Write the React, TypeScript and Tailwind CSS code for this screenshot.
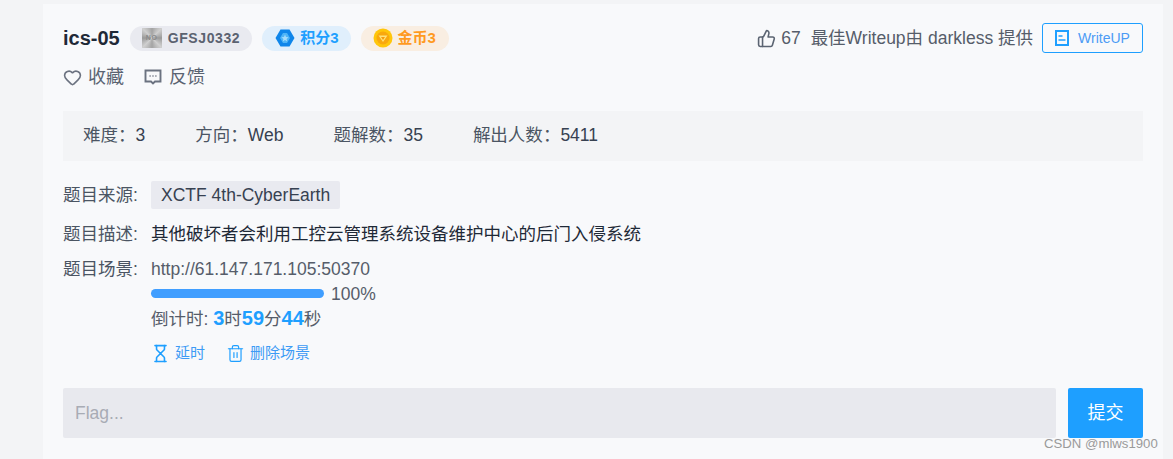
import { Heart, ThumbsUp, Hourglass, Trash2 } from "lucide-react";

const FONT = "font-['Liberation_Sans','Noto_Sans_CJK_SC',sans-serif]";

function NoImage() {
  return (
    <div className="h-5 w-5 bg-[conic-gradient(#a3a3a3,#cfcfcf,#999999,#cfcfcf,#a3a3a3,#cfcfcf,#999999,#cfcfcf,#a3a3a3)] text-center text-[7px] leading-5 text-[#8a8a8a]">
      NO
    </div>
  );
}

function PointsIcon() {
  return (
    <svg width="20" height="20" viewBox="0 0 20 20">
      <polygon points="5.5,1.5 14.5,1.5 19.5,10 14.5,18.5 5.5,18.5 0.5,10" fill="#0f86ea" />
      <polygon points="8,5 12,5 15,10 12,15 8,15 5,10" fill="#4db4f7" />
      <polygon points="10,6.5 11,9 13.5,9.2 11.6,10.9 12.2,13.5 10,12.1 7.8,13.5 8.4,10.9 6.5,9.2 9,9" fill="#a5dcfb" />
    </svg>
  );
}

function CoinIcon() {
  return (
    <svg width="20" height="20" viewBox="0 0 20 20">
      <circle cx="10" cy="10" r="9.5" fill="#ffc60a" />
      <circle cx="10" cy="10" r="6.5" fill="#f9a80d" />
      <polygon points="5.5,7.5 14.5,7.5 10,14" fill="#ffe27a" />
      <polygon points="8,9 12,9 10,12" fill="#f59a0c" />
    </svg>
  );
}

function FeedbackIcon() {
  return (
    <svg width="18" height="18" viewBox="0 0 18 18" fill="none" stroke="#6b7280" strokeWidth="1.9">
      <path d="M1.5 2.5h15v11h-5.5L9 15.5 7 13.5H1.5z" />
      <path d="M5.5 8h1.2M8.4 8h1.2M11.3 8h1.2" strokeWidth="1.5" />
    </svg>
  );
}

function DocIcon() {
  return (
    <svg width="14" height="16" viewBox="0 0 14 16" fill="none" stroke="#1e9fff">
      <path d="M1 1h12v14H1z" strokeWidth="2" />
      <path d="M3.5 6h4M3.5 10h7" strokeWidth="1.6" />
    </svg>
  );
}

function Stat({ label, value }: { label: string; value: string }) {
  return (
    <div className="mr-[50px] text-[#374151]">
      <span className="text-[#4b5563]">{label}：</span>
      {value}
    </div>
  );
}

function Row({ label, children, className }: { label: string; children: React.ReactNode; className?: string }) {
  return (
    <div className={`flex ${className ?? ""}`}>
      <div className="w-[88px] shrink-0 text-[#4b5563]">{label}:</div>
      <div className="min-w-0 flex-1">{children}</div>
    </div>
  );
}

export default function App() {
  return (
    <div className={`h-[459px] w-[1173px] overflow-hidden bg-[#f3f4f6] pt-1 pl-[43px] text-[17.5px] ${FONT}`}>
      <div className="relative h-[455px] w-[1120px] bg-[#f8f9fb] px-5 pt-[20px]">
        <div className="flex h-7 items-center justify-between">
          <div className="flex items-center">
            <span className="text-xl font-bold text-[#1f2937]">ics-05</span>
            <div className="ml-[10px] flex h-[25px] items-center gap-[6px] rounded-full bg-[#e9eaf0] pl-3 pr-3 text-sm font-bold tracking-[0.6px] text-[#5b6270]">
              <NoImage />
              GFSJ0332
            </div>
            <div className="ml-[10px] flex h-[25px] items-center gap-[5px] rounded-full bg-[#e0effc] pl-[13px] pr-3 text-[15px] font-bold text-[#1e9fff]">
              <PointsIcon />
              积分3
            </div>
            <div className="ml-[10px] flex h-[25px] items-center gap-[5px] rounded-full bg-[#f9eee2] pl-3 pr-[13px] text-[15px] font-bold text-[#ff9a1f]">
              <CoinIcon />
              金币3
            </div>
          </div>
          <div className="flex items-center text-[#565d6a]">
            <ThumbsUp size={19} strokeWidth={2} className="text-[#5b6472]" />
            <span className="ml-[5px]">67</span>
            <span className="ml-[10px]">最佳Writeup由 darkless 提供</span>
            <button className="ml-[9px] flex h-[30px] w-[101px] items-center justify-center gap-[9px] rounded-[3px] border border-[#1e9fff] text-sm text-[#4c9bf5]">
              <DocIcon />
              WriteUP
            </button>
          </div>
        </div>

        <div className="mt-[11px] flex h-7 items-center text-lg text-[#5b6472]">
          <Heart size={19} strokeWidth={2} className="text-[#6b7280]" />
          <span className="ml-[6px]">收藏</span>
          <span className="ml-[20px]"><FeedbackIcon /></span>
          <span className="ml-[7px]">反馈</span>
        </div>

        <div className="mt-5 flex h-[50px] items-center bg-[#f3f4f6] pb-px pl-5">
          <Stat label="难度" value="3" />
          <Stat label="方向" value="Web" />
          <Stat label="题解数" value="35" />
          <Stat label="解出人数" value="5411" />
        </div>

        <Row label="题目来源" className="mt-5 leading-7">
          <span className="inline-block h-7 rounded-[2px] bg-[#e9eaf0] px-[10px] text-[#374151]">XCTF 4th-CyberEarth</span>
        </Row>
        <Row label="题目描述" className="mt-[11px] leading-7">
          <span className="text-[#1f2937]">其他破坏者会利用工控云管理系统设备维护中心的后门入侵系统</span>
        </Row>
        <Row label="题目场景" className="mt-[9px] leading-6">
          <div className="text-[#565d6a]">http://61.147.171.105:50370</div>
          <div className="flex h-[25px] items-center">
            <div className="h-[9px] w-[173px] rounded-full bg-[#409eff]" />
            <span className="ml-[7px] text-[#565d6a]">100%</span>
          </div>
          <div className="text-[#565d6a]">
            倒计时: <b className="text-xl leading-6 text-[#1e9fff]">3</b>时<b className="text-xl leading-6 text-[#1e9fff]">59</b>分<b className="text-xl leading-6 text-[#1e9fff]">44</b>秒
          </div>
          <div className="mt-[10px] flex items-center text-[15px] text-[#3d9bf5]">
            <Hourglass size={19} strokeWidth={2} className="text-[#1e9fff]" />
            <span className="ml-[5px]">延时</span>
            <Trash2 size={19} strokeWidth={1.5} className="ml-[21px] text-[#1e9fff]" />
            <span className="ml-[5px]">删除场景</span>
          </div>
        </Row>

        <div className="mt-[23px] flex h-[50px]">
          <input
            placeholder="Flag..."
            className="h-full w-[993px] rounded-[2px] bg-[#e8e9ee] px-3 text-[17.5px] outline-none placeholder:text-[#a8acb5]"
          />
          <button className="ml-3 h-full w-[75px] rounded-[2px] bg-[#1e9fff] text-lg text-white">提交</button>
        </div>
      </div>
      <div className="absolute top-[436px] left-[1044px] text-[13.2px] leading-4 text-[#9a9a9a]">CSDN @mlws1900</div>
    </div>
  );
}
